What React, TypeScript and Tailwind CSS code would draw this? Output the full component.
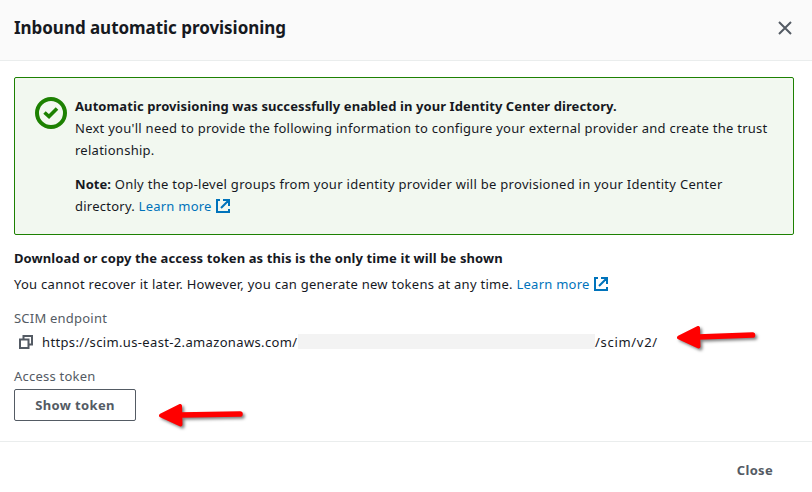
import React from 'react';

function External() {
  return (
    <svg className="ml-1 inline-block h-[14px] w-[14px] align-[-2px]" viewBox="0 0 14 14" fill="none" stroke="#0073bb" strokeWidth="2">
      <path d="M4 1H1v12h12v-3M7 1h6v6M13 1L5 9" />
    </svg>
  );
}

/* Red annotation arrow pointing left; `end` is the x of the shaft's far end. */
function Arrow({ end, endY }: { end: number; endY: number }) {
  return (
    <svg className="overflow-visible drop-shadow-[2px_2px_1.500px_rgba(0,0,0,0.5)]" width="84" height="26" viewBox="0 0 84 26" fill="#ff0000" stroke="#ff0000" strokeLinejoin="round" strokeLinecap="round">
      <path d="M3 13.500L22 4L22.500 22.500Z" strokeWidth="4" />
      <path d={`M22 13L${end} ${endY}`} strokeWidth="5.600" />
    </svg>
  );
}

export default function App() {
  return (
    <div className="flex h-[492px] w-[812px] flex-col bg-white font-['Noto_Sans',sans-serif] text-[13px] leading-[22px] tracking-[0.264px] text-[#16191f]">
      <header className="flex h-[61px] items-center justify-between border-b border-[#eaeded] bg-[#fafafa] px-[14px]">
        <h1 className="-mt-1 text-[17px] font-bold tracking-[-0.040px]">Inbound automatic provisioning</h1>
        <svg className="-mt-1 mr-[6px]" width="14" height="14" viewBox="0 0 14 14" stroke="#545b64" strokeWidth="2">
          <path d="M1 1L13 13M13 1L1 13" />
        </svg>
      </header>
      <main className="flex flex-col px-[14px] pt-4">
        <section className="mr-1 flex h-[158px] rounded-[2px] border border-[#1d8102] bg-[#f2f8f0] pt-[17px] pl-5">
          <svg className="mt-[2px] mr-2 shrink-0" width="32" height="32" viewBox="0 0 32 32" fill="none" stroke="#1d8102" strokeWidth="4">
            <circle cx="16" cy="16" r="14" />
            <path d="M9.500 15.500L14 19.500L22 11.500" strokeWidth="3.600" />
          </svg>
          <div>
            <p className="font-bold tracking-[0.090px]">Automatic provisioning was successfully enabled in your Identity Center directory.</p>
            <p>Next you'll need to provide the following information to configure your external provider and create the trust<br />relationship.</p>
            <p className="mt-3 tracking-[0.280px]"><b className="tracking-[0.060px]">Note:</b> Only the top-level groups from your identity provider will be provisioned in your Identity Center<br /><span className="tracking-[0.240px]">directory. <a className="text-[#0073bb]">Learn more<External /></a></span></p>
          </div>
        </section>
        <p className="mt-3 font-bold tracking-[0.100px]">Download or copy the access token as this is the only time it will be shown</p>
        <p className="mt-1 tracking-[0.272px]">You cannot recover it later. However, you can generate new tokens at any time. <a className="tracking-[0.240px] text-[#0073bb]">Learn more<External /></a></p>
        <p className="mt-3 tracking-[0.220px] text-[#545b64]">SCIM endpoint</p>
        <div className="relative mt-[2px] flex h-[22px] items-center pl-[5px]">
          <svg className="mr-[9px]" width="14" height="14" viewBox="0 0 14 14" fill="none" stroke="#545b64" strokeWidth="2">
            <path d="M1 4.500h8.500V13H1zM4.500 4.500V1H13v8.500H9.500" />
          </svg>
          <span className="w-[256px] tracking-[0.350px]">https://scim.us-east-2.amazonaws.com/</span>
          <span className="-mt-px h-[15px] w-[297px] bg-[#f3f3f3]" />
          <span className="tracking-[0.700px]">/scim/v2/</span>
          <div className="absolute top-[-7px] left-[662px]"><Arrow end={76.5} endY={11} /></div>
        </div>
        <p className="mt-3 tracking-[0.220px] text-[#545b64]">Access token</p>
        <div className="relative mt-[2px]">
          <button className="h-8 w-[122px] rounded-[2px] border border-[#545b64] font-bold tracking-[0.360px] text-[#545b64]">Show token</button>
          <div className="absolute top-[13px] left-[144px]"><Arrow end={82} endY={12} /></div>
        </div>
      </main>
      <footer className="mt-auto flex h-[51px] items-center justify-end border-t border-[#eaeded] pt-[5px] pr-[39px] font-bold tracking-[0.300px] text-[#545b64]">Close</footer>
    </div>
  );
}
